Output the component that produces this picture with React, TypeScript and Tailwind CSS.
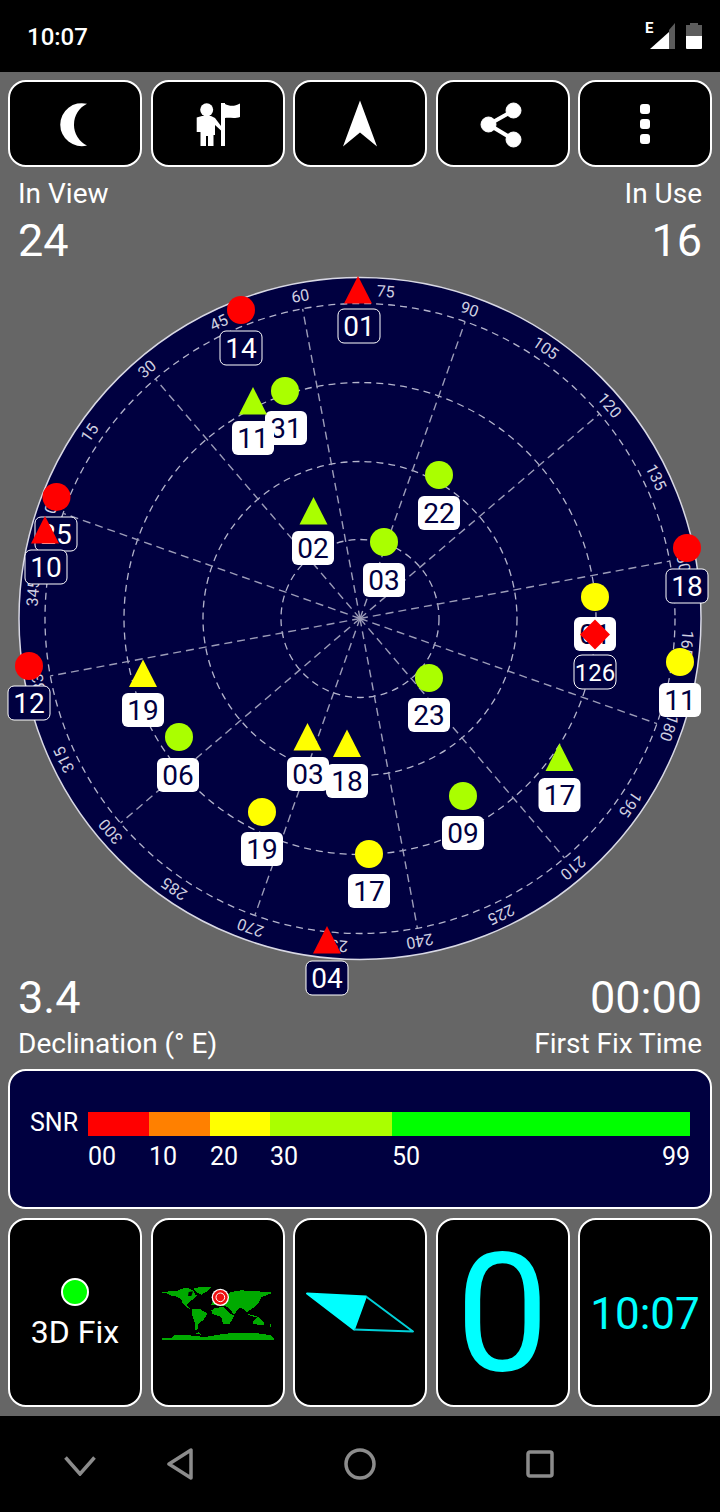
const NAVY = '#000040'
const RED = '#ff0000'
const LIME = '#aaff00'
const YELLOW = '#ffff00'
const CX = 360
const CY = 618.5

type Sat = {
  shape: 'circle' | 'triangle'
  x: number
  y: number
  color: string
  label: string
  lx: number
  ly: number
  used: boolean
}

// drawn in this order, later ones sit on top
const sats: Sat[] = [
  { shape: 'triangle', x: 358, y: 290, color: RED, label: '01', lx: 359, ly: 326, used: false },
  { shape: 'circle', x: 241, y: 310, color: RED, label: '14', lx: 241, ly: 348, used: false },
  { shape: 'circle', x: 285, y: 391, color: LIME, label: '31', lx: 286, ly: 428, used: true },
  { shape: 'triangle', x: 253, y: 401, color: LIME, label: '11', lx: 253, ly: 438, used: true },
  { shape: 'circle', x: 56.5, y: 497, color: RED, label: '25', lx: 56, ly: 534, used: false },
  { shape: 'triangle', x: 45, y: 530, color: RED, label: '10', lx: 46, ly: 567, used: false },
  { shape: 'triangle', x: 313.5, y: 511, color: LIME, label: '02', lx: 313, ly: 548, used: true },
  { shape: 'circle', x: 439, y: 475, color: LIME, label: '22', lx: 439, ly: 513, used: true },
  { shape: 'circle', x: 384, y: 542, color: LIME, label: '03', lx: 384, ly: 580, used: true },
  { shape: 'circle', x: 687, y: 548, color: RED, label: '18', lx: 687, ly: 586, used: false },
  { shape: 'circle', x: 595, y: 597, color: YELLOW, label: '01', lx: 595, ly: 634, used: true },
  { shape: 'circle', x: 680, y: 662, color: YELLOW, label: '11', lx: 680, ly: 700, used: true },
  { shape: 'circle', x: 29, y: 666, color: RED, label: '12', lx: 29, ly: 703, used: false },
  { shape: 'triangle', x: 143, y: 673.5, color: YELLOW, label: '19', lx: 143, ly: 710, used: true },
  { shape: 'circle', x: 179, y: 737, color: LIME, label: '06', lx: 178, ly: 775, used: true },
  { shape: 'triangle', x: 347, y: 743.5, color: YELLOW, label: '18', lx: 347, ly: 781, used: true },
  { shape: 'triangle', x: 307.5, y: 737, color: YELLOW, label: '03', lx: 308, ly: 774, used: true },
  { shape: 'circle', x: 262, y: 812, color: YELLOW, label: '19', lx: 262, ly: 849, used: true },
  { shape: 'circle', x: 369, y: 854, color: YELLOW, label: '17', lx: 369, ly: 891, used: true },
  { shape: 'circle', x: 429, y: 678, color: LIME, label: '23', lx: 429, ly: 715, used: true },
  { shape: 'triangle', x: 559.5, y: 757.5, color: LIME, label: '17', lx: 559.5, ly: 795, used: true },
  { shape: 'circle', x: 463, y: 796, color: LIME, label: '09', lx: 463, ly: 833, used: true },
  { shape: 'triangle', x: 327, y: 940, color: RED, label: '04', lx: 327, ly: 978, used: false },
]

const polar = (deg: number, r: number) => {
  const a = ((deg - 70.5) * Math.PI) / 180
  return { x: CX + r * Math.sin(a), y: CY - r * Math.cos(a), rot: deg - 70.5 }
}

function SatMark({ sat }: { sat: Sat }) {
  return (
    <g>
      {sat.shape === 'circle' ? (
        <circle cx={sat.x} cy={sat.y} r={14} fill={sat.color} />
      ) : (
        <polygon
          points={`${sat.x},${sat.y - 14} ${sat.x + 14},${sat.y + 13.5} ${sat.x - 14},${sat.y + 13.5}`}
          fill={sat.color}
        />
      )}
      <rect
        x={sat.lx - 21}
        y={sat.ly - 17}
        width={42}
        height={34}
        rx={6}
        fill={sat.used ? '#ffffff' : NAVY}
        stroke="#ffffff"
        strokeWidth={sat.used ? 0 : 1}
      />
      <text
        x={sat.lx}
        y={sat.ly + 10}
        textAnchor="middle"
        fontSize={28}
        fill={sat.used ? NAVY : '#ffffff'}
      >
        {sat.label}
      </text>
    </g>
  )
}

function SkyPlot() {
  const ticks = Array.from({ length: 24 }, (_, i) => i * 15)
  const spokes = Array.from({ length: 12 }, (_, i) => i * 30)
  return (
    <svg width={720} height={702} viewBox="0 270 720 702" className="block overflow-visible">
      <circle cx={CX} cy={CY} r={341} fill={NAVY} stroke="#d8d8e4" strokeWidth={1.5} />
      {[79, 157, 236, 315].map((r) => (
        <circle
          key={r}
          cx={CX}
          cy={CY}
          r={r}
          fill="none"
          stroke="#b4b4cc"
          strokeWidth={1.3}
          strokeDasharray="7 5"
        />
      ))}
      {spokes.map((d) => {
        const p = polar(d, 315)
        return (
          <line
            key={d}
            x1={CX}
            y1={CY}
            x2={p.x}
            y2={p.y}
            stroke="#9c9cb8"
            strokeWidth={1.4}
            strokeDasharray="8 5"
          />
        )
      })}
      {ticks.map((d) => {
        const p = polar(d, 328)
        return (
          <text
            key={d}
            x={p.x}
            y={p.y + 5.5}
            textAnchor="middle"
            fontSize={16}
            fill="#d0d0e0"
            transform={`rotate(${p.rot} ${p.x} ${p.y})`}
          >
            {d}
          </text>
        )
      })}
      {sats.map((s, i) => (
        <SatMark key={i} sat={s} />
      ))}
      {/* the one on top of the yellow 01 */}
      <rect x={574} y={655} width={42} height={34} rx={8} fill={NAVY} stroke="#ffffff" strokeWidth={1} />
      <text x={595} y={681} textAnchor="middle" fontSize={24} fill="#ffffff">
        126
      </text>
      <polygon points="595,619.5 610,634.5 595,649.5 580,634.5" fill={RED} />
    </svg>
  )
}

function WorldMap() {
  return (
    <svg width={120} height={62} viewBox="0 0 360 186">
      <g fill="#00aa00" shapeRendering="crispEdges">
        <rect x={12} y={29} width={20} height={5} />
        <polygon points="28,30 30,27 60,26 72,20 90,18 105,25 112,38 118,40 110,48 100,55 92,62 85,70 95,80 88,78 75,65 68,50 50,42 35,40 28,35" />
        <polygon points="108,17 160,15 148,28 130,38 118,32 108,24" />
        <polygon points="103,82 125,80 148,95 145,100 135,115 122,125 118,142 110,145 110,120 103,100" />
        <polygon points="160,68 165,58 170,55 205,42 218,30 250,25 300,28 345,32 330,38 310,45 300,65 290,75 275,85 268,92 255,80 245,78 235,88 228,100 220,85 212,78 202,72 190,70" />
        <polygon points="160,85 170,78 195,75 205,82 215,95 228,100 222,115 215,125 195,125 190,105 175,100 163,95" />
        <polygon points="265,95 285,100 300,105 280,103" />
        <polygon points="283,120 300,105 318,120 320,130 300,128 285,125" />
        <polygon points="335,130 340,125 338,135" />
        <polygon points="40,170 50,160 80,158 110,162 140,165 200,155 260,152 310,155 340,160 348,170" />
        <rect x={12} y={169} width={336} height={5} />
        <polygon points="112,155 122,150 128,158" />
      </g>
      <polygon points="92,30 105,28 100,42 90,42" fill="#000000" />
      <circle cx={187} cy={46} r={26} fill="#ffffff" />
      <circle cx={187} cy={46} r={22} fill="#ee1111" />
      <circle cx={187} cy={46} r={13} fill="none" stroke="#ffffff" strokeWidth={3} />
    </svg>
  )
}

function Panel({ children }: { children: React.ReactNode }) {
  return (
    <div className="flex flex-1 items-center justify-center rounded-[18px] border-2 border-white bg-black">
      {children}
    </div>
  )
}

const snrBands = [
  { w: 'w-[61px]', bg: 'bg-[#ff0000]', label: '00' },
  { w: 'w-[61px]', bg: 'bg-[#ff8000]', label: '10' },
  { w: 'w-[60px]', bg: 'bg-[#ffff00]', label: '20' },
  { w: 'w-[122px]', bg: 'bg-[#aaff00]', label: '30' },
  { w: 'w-[298px]', bg: 'bg-[#00ff00]', label: '50' },
]

export default function App() {
  return (
    <div className="flex h-[1512px] w-[720px] flex-col overflow-hidden bg-[#666666] font-[family-name:Roboto,sans-serif] text-white">
      {/* status bar */}
      <div className="flex h-[72px] shrink-0 items-center justify-between bg-black pl-[27px] pr-[17px] pt-[2px]">
        <span className="text-[24px] font-medium leading-none">10:07</span>
        <svg width={60} height={32} viewBox="643 21 60 32" className="-mt-[2px]">
          <text x={645} y={34} fontSize={15} fontWeight={700} fill="#ffffff">
            E
          </text>
          <polygon points="650,50 669,50 669,33" fill="#ffffff" />
          <polygon points="669,50 675,50 675,24 669,31" fill="#5c5c5c" />
          <path d="M690 24h8v2h4v11h-16v-11h4z" fill="#5c5c5c" />
          <path d="M686 37h16v12a1 1 0 0 1-1 1h-14a1 1 0 0 1-1-1z" fill="#ffffff" />
        </svg>
      </div>

      {/* toolbar */}
      <div className="mt-2 flex h-[87px] shrink-0 gap-[8.5px] px-2">
        <Panel>
          <svg width={48} height={48} viewBox="0 0 48 48">
            <path d="M36 3.8A21.500 21.500 0 1 0 36 45.500A23.200 23.200 0 0 1 36 3.800Z" fill="#ffffff" />
          </svg>
        </Panel>
        <Panel>
          <svg width={48} height={48} viewBox="0 0 48 48">
            <g fill="#ffffff">
              <circle cx={12.700} cy={9.800} r={6.500} />
              <path d="M2.700 17.500L8 16H17L21 18L27 26V30.500L21 25V35H19.500V46H14V36H12V46H6.500V34V32H2.700Z" />
              <rect x={27} y={3} width={4} height={43} />
              <path d="M31 4C35 6 40 7 46 3.500V17C40 19 35 17 31 18Z" />
            </g>
          </svg>
        </Panel>
        <Panel>
          <svg width={48} height={48} viewBox="0 0 48 48">
            <polygon points="24,0.500 41,46.500 24,32.500 7,46.500" fill="#ffffff" />
          </svg>
        </Panel>
        <Panel>
          <svg width={48} height={48} viewBox="0 0 48 48">
            <g fill="#ffffff" stroke="#ffffff">
              <circle cx={34.500} cy={10.500} r={7.500} />
              <circle cx={9.500} cy={24.500} r={7.500} />
              <circle cx={34.500} cy={39.500} r={7.500} />
              <path d="M34.500 10.500L9.500 24.500L34.500 39.500" fill="none" strokeWidth={4} />
            </g>
          </svg>
        </Panel>
        <Panel>
          <div className="flex flex-col gap-[5px]">
            <div className="h-[10px] w-[10px] rounded-[3px] bg-white" />
            <div className="h-[10px] w-[10px] rounded-[3px] bg-white" />
            <div className="h-[10px] w-[10px] rounded-[3px] bg-white" />
          </div>
        </Panel>
      </div>

      {/* counts */}
      <div className="flex h-[103px] shrink-0 justify-between px-[18px] pt-3">
        <div>
          <div className="text-[28px] leading-[30px]">In View</div>
          <div className="mt-[6px] text-[45px] leading-[52px]">24</div>
        </div>
        <div className="text-right">
          <div className="text-[28px] leading-[30px]">In Use</div>
          <div className="mt-[6px] text-[45px] leading-[52px]">16</div>
        </div>
      </div>

      <SkyPlot />

      {/* declination + first fix */}
      <div className="flex shrink-0 justify-between px-[18px]">
        <div>
          <div className="text-[45px] leading-[52px]">3.4</div>
          <div className="mt-[5px] text-[28px] leading-[30px]">Declination (° E)</div>
        </div>
        <div className="text-right">
          <div className="text-[45px] leading-[52px]">00:00</div>
          <div className="mt-[5px] text-[28px] leading-[30px]">First Fix Time</div>
        </div>
      </div>

      {/* SNR legend */}
      <div className="mx-2 mt-[10px] h-[140px] shrink-0 rounded-[18px] border-2 border-white bg-[#000040] pl-5 pt-[41px]">
        <div className="flex h-[24px] items-center">
          <span className="w-[58px] pb-[3px] text-[25px] leading-none">SNR</span>
          {snrBands.map((b) => (
            <div key={b.label} className={`${b.w} ${b.bg} h-full`} />
          ))}
        </div>
        <div className="mt-[7px] flex pl-[58px] text-[25px] leading-[28px]">
          {snrBands.slice(0, 4).map((b) => (
            <span key={b.label} className={b.w}>
              {b.label}
            </span>
          ))}
          <span className="flex w-[298px] justify-between">
            <span>50</span>
            <span>99</span>
          </span>
        </div>
      </div>

      {/* bottom tiles */}
      <div className="mt-[9px] flex h-[189px] shrink-0 gap-[8.5px] px-2">
        <Panel>
          <div className="mt-[3px] flex flex-col items-center gap-2">
            <div className="h-[28px] w-[28px] rounded-full border-2 border-white bg-[#00ff00]" />
            <span className="text-[32px] leading-[36px]">3D Fix</span>
          </div>
        </Panel>
        <Panel>
          <WorldMap />
        </Panel>
        <Panel>
          <svg width={110} height={44} viewBox="0 0 110 44">
            <polygon
              points="2,2.500 61,5.500 49,38.500"
              fill="#00ffff"
              stroke="#00ffff"
              strokeWidth={2}
              strokeLinejoin="round"
            />
            <polyline
              points="61,5.500 108,40.500 49,38.500"
              fill="none"
              stroke="#00d0d8"
              strokeWidth={2}
              strokeLinejoin="round"
            />
          </svg>
        </Panel>
        <Panel>
          <span className="mt-[2px] text-[166px] leading-none text-[#00ffff]">0</span>
        </Panel>
        <Panel>
          <span className="mt-[2px] text-[44px] leading-none text-[#00ffff]">10:07</span>
        </Panel>
      </div>

      {/* nav bar */}
      <div className="mt-[9px] flex flex-1 items-center bg-black pl-[64px]">
        <svg width={32} height={20} viewBox="0 0 32 20" className="mt-[4px]">
          <polyline points="1.500,1.500 16,18 30.500,1.500" fill="none" stroke="#8c8c8c" strokeWidth={3.500} />
        </svg>
        <svg width={28} height={32} viewBox="0 0 28 32" className="ml-[70px]">
          <polygon points="3,16 25,2 25,30" fill="none" stroke="#8c8c8c" strokeWidth={3.500} strokeLinejoin="round" />
        </svg>
        <svg width={32} height={32} viewBox="0 0 32 32" className="ml-[150px]">
          <circle cx={16} cy={16} r={14} fill="none" stroke="#8c8c8c" strokeWidth={3.500} />
        </svg>
        <svg width={28} height={28} viewBox="0 0 28 28" className="ml-[150px]">
          <rect x={2} y={2} width={24} height={24} rx={2} fill="none" stroke="#8c8c8c" strokeWidth={3.500} />
        </svg>
      </div>
    </div>
  )
}
